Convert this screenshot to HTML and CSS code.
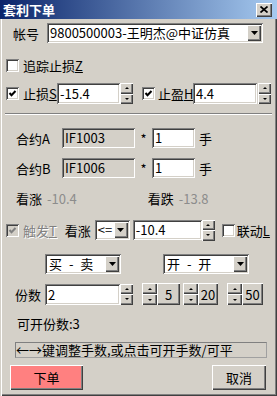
FILE: index.html
```html
<!DOCTYPE html>
<html lang="zh-CN">
  <head>
    <meta charset="UTF-8" />
    <title>套利下单</title>
    <link rel="stylesheet" href="styles.css">
  </head>
  <body>
    <div class="win">
      <div class="titlebar">
        <span class="title">套利下单</span>
        <span class="close">
          <svg width="8" height="7" viewBox="0 0 8 7"><path d="M0.5 0.5 L7.5 6.5 M7.5 0.5 L0.5 6.5" stroke="#000" stroke-width="1.7" fill="none"/></svg>
        </span>
      </div>

      <div class="row r-acc">
        <span class="lbl-acc">帐号</span>
        <div class="combo combo-acc">
          <span class="ctext">9800500003-王明杰@中证仿真</span>
          <span class="dd"><svg width="7" height="4" viewBox="0 0 7 4"><polygon points="0,0 7,0 3.5,4" fill="#000"/></svg></span>
        </div>
      </div>

      <div class="row r-trail">
        <span class="chk"></span>
        <span class="clbl">追踪止损<u>Z</u></span>
      </div>

      <div class="row r-stop">
        <span class="chk on"><svg width="9" height="9" viewBox="0 0 9 9"><polyline points="1.5,4 3.5,6.2 7.5,2" stroke="#000" stroke-width="2" fill="none"/></svg></span>
        <span class="clbl w-stop">止损<u>S</u></span>
        <span class="field w-63">-15.4</span>
        <span class="spin"><span class="sb"><i class="up"></i></span><span class="sb"><i class="dn"></i></span></span>
        <span class="chk on gap-profit"><svg width="9" height="9" viewBox="0 0 9 9"><polyline points="1.5,4 3.5,6.2 7.5,2" stroke="#000" stroke-width="2" fill="none"/></svg></span>
        <span class="clbl w-profit">止盈<u>H</u></span>
        <span class="field w-64">4.4</span>
        <span class="spin s-right"><span class="sb"><i class="up"></i></span><span class="sb"><i class="dn"></i></span></span>
      </div>

      <div class="sep"></div>

      <div class="row r-leg first">
        <span class="lbl-leg">合约A</span>
        <span class="field off w-73">IF1003</span>
        <span class="star">*</span>
        <span class="field w-43">1</span>
        <span class="unit">手</span>
      </div>
      <div class="row r-leg">
        <span class="lbl-leg">合约B</span>
        <span class="field off w-73">IF1006</span>
        <span class="star">*</span>
        <span class="field w-43">1</span>
        <span class="unit">手</span>
      </div>

      <div class="row r-quote">
        <span>看涨</span><span class="qv">-10.4</span>
        <span class="q2">看跌</span><span class="qv">-13.8</span>
      </div>

      <div class="row r-trigger">
        <span class="chk dis"><svg width="9" height="9" viewBox="0 0 9 9"><polyline points="1.5,4 3.5,6.2 7.5,2" stroke="#808080" stroke-width="2" fill="none"/></svg></span>
        <span class="clbl gray">触发<u>T</u></span>
        <span class="lbl-up">看涨</span>
        <div class="combo w-35">
          <span class="ctext">&lt;=</span>
          <span class="dd"><svg width="7" height="4" viewBox="0 0 7 4"><polygon points="0,0 7,0 3.5,4" fill="#000"/></svg></span>
        </div>
        <span class="field w-69 ml-3">-10.4</span>
        <span class="spin"><span class="sb"><i class="up"></i></span><span class="sb"><i class="dn"></i></span></span>
        <span class="chk gap-link"></span>
        <span class="clbl2">联动<u>L</u></span>
      </div>

      <div class="row r-dir">
        <div class="combo w-76">
          <span class="ctext spaced">买 - 卖</span>
          <span class="dd"><svg width="7" height="4" viewBox="0 0 7 4"><polygon points="0,0 7,0 3.5,4" fill="#000"/></svg></span>
        </div>
        <div class="combo w-86 gap-oc">
          <span class="ctext spaced">开 - 开</span>
          <span class="dd"><svg width="7" height="4" viewBox="0 0 7 4"><polygon points="0,0 7,0 3.5,4" fill="#000"/></svg></span>
        </div>
      </div>

      <div class="row r-qty">
        <span class="lbl-qty">份数</span>
        <span class="field w-75">2</span>
        <span class="spin"><span class="sb"><i class="up"></i></span><span class="sb"><i class="dn"></i></span></span>
        <span class="grp g1">
          <span class="spin wide"><span class="sb"><i class="up"></i></span><span class="sb"><i class="dn"></i></span></span>
          <span class="btn b5">5</span>
        </span>
        <span class="grp g2">
          <span class="spin wide"><span class="sb"><i class="up"></i></span><span class="sb"><i class="dn"></i></span></span>
          <span class="btn b20">20</span>
        </span>
        <span class="grp g3">
          <span class="spin wide"><span class="sb"><i class="up"></i></span><span class="sb"><i class="dn"></i></span></span>
          <span class="btn b50">50</span>
        </span>
      </div>

      <div class="row r-avail">可开份数:3</div>

      <div class="hint">←→键调整手数,或点击可开手数/可平</div>

      <div class="row r-actions">
        <span class="btn order">下单</span>
        <span class="btn cancel">取消</span>
      </div>
    </div>
  </body>
</html>
```

FILE: styles.css
```css
* {
  box-sizing: border-box;
}
body {
  margin: 0;
  background: #d4d0c8;
  font-family: "Noto Sans CJK SC", "Noto Sans", sans-serif;
  font-size: 13px;
  color: #000;
}
.win {
  width: 277px;
  height: 396px;
  background: #d4d0c8;
  box-shadow: inset 1px 0 #d4d0c8, inset 2px 0 #fff, inset -1px -1px #404040, inset -2px -2px #808080;
  overflow: hidden;
}
.titlebar {
  height: 19px;
  display: flex;
  align-items: center;
  justify-content: space-between;
  padding: 0 5px 0 3px;
  background: linear-gradient(to right, #0a246a, #a6caf0);
  color: #fff;
}
.title {
  font-weight: bold;
  line-height: 19px;
}
.close {
  width: 16px;
  height: 14px;
  display: flex;
  align-items: center;
  justify-content: center;
  background: #d4d0c8;
  box-shadow: inset 1px 1px #fff, inset -1px -1px #404040, inset -2px -2px #808080;
}

.row {
  display: flex;
  align-items: center;
}

/* sunken edit field */
.field {
  height: 21px;
  line-height: 17px;
  padding: 2px 3px;
  background: #fff;
  white-space: nowrap;
  box-shadow: inset 1px 1px #808080, inset -1px -1px #fff, inset 2px 2px #404040, inset -2px -2px #d4d0c8;
}
.field.off {
  background: #d4d0c8;
}

.combo {
  display: flex;
  align-items: center;
  height: 20px;
  padding: 2px;
  background: #fff;
  box-shadow: inset 1px 1px #808080, inset -1px -1px #fff, inset 2px 2px #404040, inset -2px -2px #d4d0c8;
}
.ctext {
  flex: 1;
  padding-left: 1px;
  line-height: 16px;
  white-space: nowrap;
}
.ctext.spaced {
  word-spacing: 4px;
  padding-left: 2px;
}
.dd {
  width: 14px;
  height: 16px;
  flex: none;
  display: flex;
  align-items: center;
  justify-content: center;
  background: #d4d0c8;
  box-shadow: inset 1px 1px #fff, inset -1px -1px #404040, inset -2px -2px #808080;
}

.chk {
  width: 13px;
  height: 13px;
  flex: none;
  display: flex;
  align-items: center;
  justify-content: center;
  background: #fff;
  box-shadow: inset 1px 1px #808080, inset -1px -1px #fff, inset 2px 2px #404040, inset -2px -2px #d4d0c8;
}
.chk.dis {
  background: #d4d0c8;
}
.clbl {
  margin-left: 4px;
  white-space: nowrap;
}
.gray {
  color: #808080;
  text-shadow: 1px 1px #fff;
}

.spin {
  display: flex;
  flex-direction: column;
  width: 13px;
  height: 21px;
  flex: none;
}
.spin.wide {
  width: 15px;
}
.sb {
  flex: 1;
  display: flex;
  align-items: center;
  justify-content: center;
  background: #d4d0c8;
  box-shadow: inset 1px 1px #fff, inset -1px -1px #404040, inset -2px -2px #808080;
}
.up,
.dn {
  width: 0;
  height: 0;
  border-left: 2px solid transparent;
  border-right: 2px solid transparent;
}
.up {
  border-bottom: 2px solid #000;
}
.dn {
  border-top: 2px solid #000;
}

.btn {
  display: flex;
  align-items: center;
  justify-content: center;
  background: #d4d0c8;
  box-shadow: inset 1px 1px #fff, inset -1px -1px #404040, inset -2px -2px #808080;
}

/* account */
.r-acc {
  margin-top: 4px;
  height: 20px;
  padding-left: 13px;
}
.lbl-acc {
  width: 34px;
}
.combo-acc {
  width: 216px;
}

.r-trail {
  margin-top: 12px;
  height: 20px;
  padding-left: 6px;
}

/* stop loss / take profit */
.r-stop {
  margin-top: 8px;
  height: 21px;
  padding-left: 6px;
}
.w-stop {
  width: 34px;
}
.w-profit {
  width: 35px;
  margin-left: 3px;
}
.w-63 {
  width: 63px;
}
.w-64 {
  width: 64px;
}
.gap-profit {
  margin-left: 9px;
}
.s-right {
  margin-left: 1px;
}

.sep {
  margin: 9px 5px 0 5px;
  height: 2px;
  border-top: 1px solid #808080;
  border-bottom: 1px solid #fff;
}

/* contracts */
.r-leg {
  margin-top: 10px;
  height: 20px;
  padding-left: 16px;
}
.r-leg.first {
  margin-top: 13px;
}
.r-leg .field {
  height: 20px;
  line-height: 16px;
}
.lbl-leg {
  width: 46px;
}
.w-73 {
  width: 73px;
}
.w-43 {
  width: 43px;
}
.star {
  width: 17px;
  text-align: center;
}
.unit {
  margin-left: 4px;
}

.r-quote {
  margin-top: 12px;
  height: 16px;
  padding-left: 16px;
}
.qv {
  margin-left: 5px;
  color: #8c8c8c;
}
.q2 {
  margin-left: 71px;
}

/* trigger */
.r-trigger {
  margin-top: 14px;
  height: 20px;
  padding-left: 6px;
}
.r-trigger .field {
  height: 20px;
  line-height: 16px;
}
.lbl-up {
  width: 30px;
  margin-left: 8px;
}
.w-35 {
  width: 35px;
}
.w-69 {
  width: 69px;
}
.ml-3 {
  margin-left: 3px;
}
.gap-link {
  margin-left: 7px;
}
.clbl2 {
  margin-left: 2px;
}

/* direction */
.r-dir {
  margin-top: 14px;
  height: 20px;
  padding-left: 45px;
}
.w-76 {
  width: 76px;
}
.w-86 {
  width: 86px;
}
.gap-oc {
  margin-left: 42px;
}

/* quantity */
.r-qty {
  margin-top: 9px;
  height: 22px;
  padding-left: 15px;
}
.lbl-qty {
  width: 30px;
}
.w-75 {
  width: 75px;
}
.grp {
  display: flex;
  height: 22px;
}
.grp .spin {
  height: 22px;
}
.g1 {
  margin-left: 9px;
}
.g2 {
  margin-left: 3px;
}
.g3 {
  margin-left: 9px;
}
.b5 {
  width: 23px;
}
.b20 {
  width: 20px;
}
.b50 {
  width: 21px;
}

.r-avail {
  margin-top: 10px;
  height: 16px;
  padding-left: 17px;
}

.hint {
  margin: 11px 10px 0 15px;
  height: 16px;
  line-height: 14px;
  border: 1px solid #808080;
  border-right-color: #a0a0a0;
  border-bottom-color: #a0a0a0;
  white-space: nowrap;
}

.r-actions {
  margin-top: 7px;
  height: 25px;
  padding: 0 11px 0 10px;
  justify-content: space-between;
}
.order {
  width: 73px;
  height: 25px;
  background: #ff8080;
}
.cancel {
  width: 54px;
  height: 25px;
}
```
